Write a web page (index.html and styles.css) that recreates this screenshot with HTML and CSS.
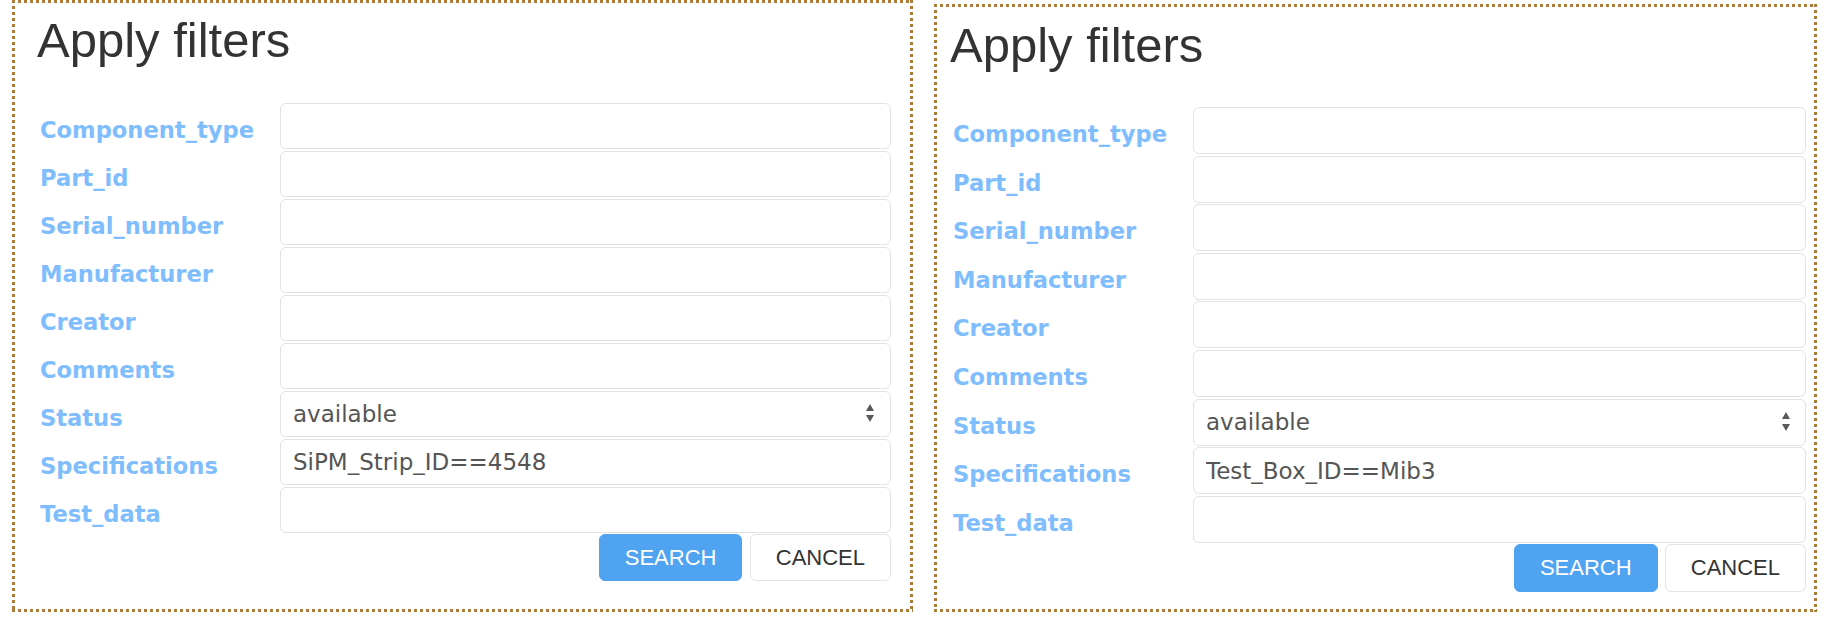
FILE: index.html
```html
<!DOCTYPE HTML>
<html>

<head>
    <title>Apply filters</title>
    <meta name="viewport" content="width=device-width, initial-scale=1">
    <link rel="icon" href="data:,">
    <link rel="stylesheet" href="styles.css">
</head>

<body>
    <div class="page">
        <div class="panel panel-first">
            <h2>Apply filters</h2>
            <form class="filters">
                <label>Component_type</label>
                <input type="text" class="field" value="">
                <label>Part_id</label>
                <input type="text" class="field" value="">
                <label>Serial_number</label>
                <input type="text" class="field" value="">
                <label>Manufacturer</label>
                <input type="text" class="field" value="">
                <label>Creator</label>
                <input type="text" class="field" value="">
                <label>Comments</label>
                <input type="text" class="field" value="">
                <label>Status</label>
                <div class="select-wrap">
                    <select class="field">
                        <option>available</option>
                    </select>
                    <svg class="arrows" width="8" height="18" viewBox="0 0 8 18">
                        <path d="M4 0 L8 7 L0 7 Z" fill="#5a5a5a" />
                        <path d="M0 11 L8 11 L4 18 Z" fill="#5a5a5a" />
                    </svg>
                </div>
                <label>Specifications</label>
                <input type="text" class="field" value="SiPM_Strip_ID==4548">
                <label>Test_data</label>
                <input type="text" class="field" value="">
            </form>
            <div class="actions">
                <button class="button button-primary">SEARCH</button>
                <button class="button">CANCEL</button>
            </div>
        </div>

        <div class="panel panel-second">
            <h2>Apply filters</h2>
            <form class="filters">
                <label>Component_type</label>
                <input type="text" class="field" value="">
                <label>Part_id</label>
                <input type="text" class="field" value="">
                <label>Serial_number</label>
                <input type="text" class="field" value="">
                <label>Manufacturer</label>
                <input type="text" class="field" value="">
                <label>Creator</label>
                <input type="text" class="field" value="">
                <label>Comments</label>
                <input type="text" class="field" value="">
                <label>Status</label>
                <div class="select-wrap">
                    <select class="field">
                        <option>available</option>
                    </select>
                    <svg class="arrows" width="8" height="19" viewBox="0 0 8 19">
                        <path d="M4 0 L8 7 L0 7 Z" fill="#5a5a5a" />
                        <path d="M0 12 L8 12 L4 19 Z" fill="#5a5a5a" />
                    </svg>
                </div>
                <label>Specifications</label>
                <input type="text" class="field" value="Test_Box_ID==Mib3">
                <label>Test_data</label>
                <input type="text" class="field" value="">
            </form>
            <div class="actions">
                <button class="button button-primary">SEARCH</button>
                <button class="button">CANCEL</button>
            </div>
        </div>
    </div>
</body>

</html>
```

FILE: styles.css
```css
html {
    font-family: "Liberation Sans", Arial, Helvetica, sans-serif;
}

body {
    margin: 0;
    background-color: #fff;
}

.page {
    display: flex;
    align-items: flex-end;
    gap: 21px;
    padding-left: 12px;
    height: 612px;
}

/* square dotted frame, drawn with gradients so the dots stay square */
.panel {
    box-sizing: border-box;
    border: 3px solid transparent;
    background:
        linear-gradient(to right, #ad7a38 50%, transparent 0) top left / 6px 3px repeat-x,
        linear-gradient(to right, #ad7a38 50%, transparent 0) bottom left / 6px 3px repeat-x,
        linear-gradient(to bottom, #ad7a38 50%, transparent 0) top left / 3px 6px repeat-y,
        linear-gradient(to bottom, #ad7a38 50%, transparent 0) top right / 3px 6px repeat-y,
        #fff;
    background-origin: border-box;
}

.panel-first {
    width: 901px;
    height: 612px;
    padding: 9px 19px 0 22px;
}

.panel-second {
    width: 883px;
    height: 608px;
    padding: 10px 8px 0 13px;
}

h2 {
    margin: 0;
    font-size: 49px;
    line-height: 56px;
    font-weight: normal;
    color: #333;
}

.filters {
    display: grid;
    grid-template-columns: 243px 1fr;
    row-gap: 2px;
    margin: 35px 0 0;
}

.panel-second .filters {
    margin-top: 34px;
    row-gap: 1.6px;
}

.filters label {
    padding: 8px 0 0 3px;
    line-height: 38px;
    font-family: "DejaVu Sans", Verdana, sans-serif;
    font-size: 22.6px;
    font-weight: bold;
    color: #80bdfc;
}

.field {
    box-sizing: border-box;
    width: 100%;
    height: 46px;
    margin: 0;
    padding: 0 12px;
    border: 1px solid #e2e2e2;
    border-radius: 6px;
    background-color: #fff;
    font-family: "DejaVu Sans", Verdana, sans-serif;
    font-size: 23px;
    color: #555;
    outline: none;
}

.panel-second .field {
    height: 47px;
}

select.field {
    -webkit-appearance: none;
    appearance: none;
}

.select-wrap {
    position: relative;
}

.arrows {
    position: absolute;
    right: 17px;
    top: 13px;
}

.panel-second .arrows {
    right: 16px;
    top: 13px;
}

.actions {
    display: flex;
    justify-content: flex-end;
    gap: 8px;
    margin-top: 1px;
}

.panel-second .actions {
    gap: 7px;
}

.button {
    box-sizing: border-box;
    height: 47px;
    padding: 0 25px;
    font-family: "Liberation Sans", Arial, sans-serif;
    font-size: 22px;
    color: #333;
    background-color: #fff;
    border: 1px solid #e4e4e4;
    border-radius: 6px;
}

.panel-second .button {
    height: 48px;
}

.button-primary {
    width: 143px;
    color: #fff;
    background-color: #4fa3f0;
    border-color: #4fa3f0;
}

.panel-second .button-primary {
    width: 144px;
}
```
